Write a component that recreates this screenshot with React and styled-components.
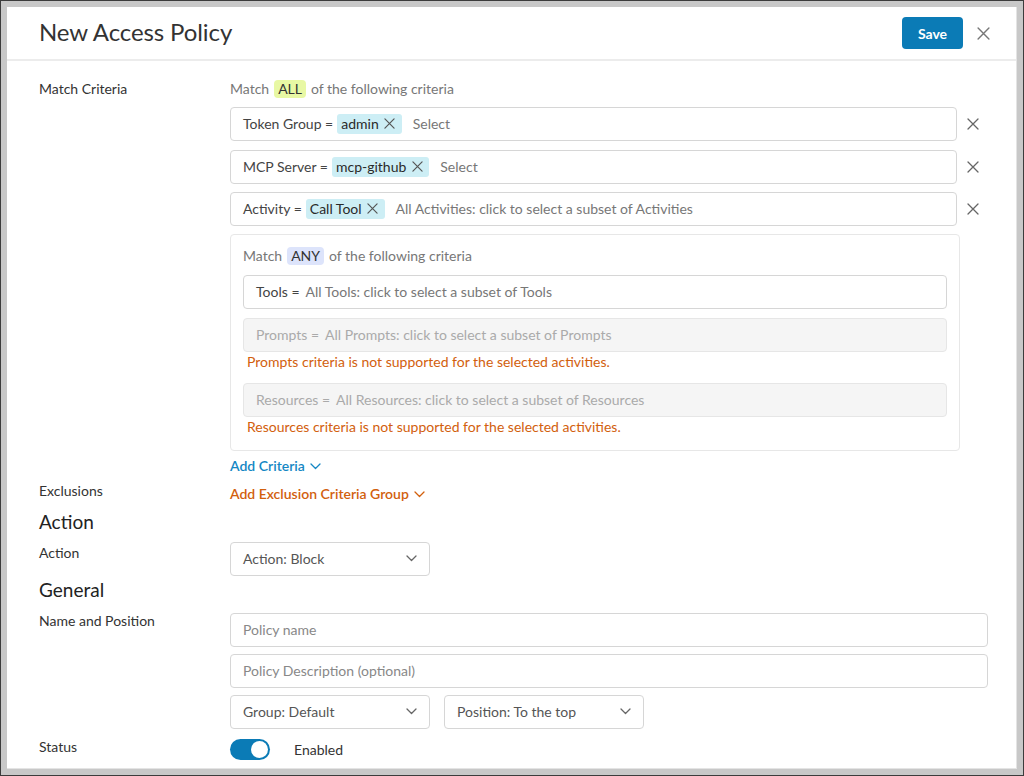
import React from "react";
import styled, { createGlobalStyle } from "styled-components";

const Global = createGlobalStyle`
  html, body { margin: 0; padding: 0; }
  body {
    width: 1024px; height: 776px; overflow: hidden;
    background: #c8c8c8;
    font-family: Lato, "Open Sans", "Liberation Sans", sans-serif;
    color: #333;
  }
  #root { height: 100%; }
`;

const Frame = styled.div`
  box-sizing: border-box;
  width: 1024px; height: 776px;
  border: 1px solid #3c3c3c;
  padding: 6px 6px 7px 6px;
  background: #c8c8c8;
`;

const Panel = styled.div`
  box-sizing: border-box;
  width: 1010px; height: 762px;
  background: #fff;
  border-right: 1px solid #e4e4e4;
  border-bottom: 1px solid #e4e4e4;
  overflow: hidden;
  display: flex;
  flex-direction: column;
`;

const Header = styled.div`
  height: 52px;
  border-bottom: 2px solid #ececec;
  display: flex;
  align-items: center;
  padding: 0 25px 0 32px;
  flex-shrink: 0;
`;

const Title = styled.h1`
  margin: 0 0 3px 0;
  font-size: 24px;
  font-weight: 400;
  color: #333;
  flex: 1;
  letter-spacing: -0.1px;
`;

const SaveButton = styled.button`
  width: 61px; height: 32px;
  border: none;
  border-radius: 4px;
  background: #0b7bb6;
  color: #fff;
  font-family: inherit;
  font-weight: 700;
  font-size: 14px;
  margin-right: 12px;
`;

const IconButton = styled.span`
  display: inline-flex;
  align-items: center;
  justify-content: center;
  width: ${p => p.$size || 24}px;
  height: ${p => p.$size || 24}px;
  color: ${p => p.$color || "#666"};
  flex-shrink: 0;
`;

const Body = styled.div`
  padding: 18px 28px 0 32px;
  display: flex;
  flex-direction: column;
`;

const FormRow = styled.div`
  display: grid;
  grid-template-columns: 191px 1fr;
  margin-top: ${p => p.$mt || 0}px;
`;

const Label = styled.div`
  font-size: 14px;
  line-height: 20px;
  color: #333;
  padding-top: ${p => p.$pt || 0}px;
`;

const Field = styled.div`
  display: flex;
  flex-direction: column;
  padding-top: ${p => p.$pt || 0}px;
`;

const SectionHeading = styled.h2`
  margin: ${p => p.$mt || 0}px 0 0 0;
  font-size: 19px;
  line-height: 24px;
  font-weight: 400;
  color: #222;
`;

const MatchLine = styled.div`
  font-size: 14px;
  line-height: 20px;
  color: #777;
  display: flex;
  align-items: center;
  gap: 5px;
`;

const Badge = styled.span`
  background: ${p => p.$bg};
  color: #333;
  border-radius: 4px;
  padding: 0 4px;
  line-height: 18px;
`;

const CriteriaRow = styled.div`
  display: flex;
  align-items: center;
  margin-top: ${p => p.$mt || 0}px;
`;

const Box = styled.div`
  box-sizing: border-box;
  height: 34px;
  flex: ${p => (p.$grow ? "1 1 auto" : "0 0 auto")};
  width: ${p => (p.$w ? p.$w + "px" : "auto")};
  border: 1px solid ${p => (p.$disabled ? "#e6e6e6" : "#d6d6d6")};
  background: ${p => (p.$disabled ? "#f5f5f5" : "#fff")};
  border-radius: 4px;
  display: flex;
  align-items: center;
  padding: 0 12px 1px 12px;
  font-size: 14px;
  color: ${p => (p.$disabled ? "#aaa" : "#555")};
  gap: 4px;
  margin-top: ${p => p.$mt || 0}px;
  white-space: nowrap;
`;

const Key = styled.span`
  color: ${p => (p.$disabled ? "#aaa" : "#444")};
`;

const Hint = styled.span`
  color: ${p => (p.$disabled ? "#aaa" : "#777")};
  margin-left: 2px;
`;

const Placeholder = styled.span`
  color: #888;
`;

const Chip = styled.span`
  display: inline-flex;
  align-items: center;
  gap: 4px;
  background: #cdeef5;
  color: #2a2a2a;
  border-radius: 3px;
  height: 20px;
  padding: 0 5px 0 4px;
  margin-right: 5px;
`;

const RemoveCol = styled.span`
  width: 31px;
  display: flex;
  justify-content: center;
  flex-shrink: 0;
`;

const Nested = styled.div`
  box-sizing: border-box;
  width: 730px;
  margin-top: 8px;
  border: 1px solid #e7e7e7;
  border-radius: 4px;
  padding: 11px 12px 14px 12px;
  display: flex;
  flex-direction: column;
`;

const ErrorText = styled.div`
  font-size: 14px;
  line-height: 18px;
  color: #d2600d;
  margin-top: 1px;
  padding-left: 4px;
`;

const LinkButton = styled.div`
  display: flex;
  align-items: center;
  gap: 5px;
  font-size: 14px;
  line-height: 20px;
  font-weight: 600;
  color: ${p => p.$color};
  margin-top: ${p => p.$mt || 0}px;
`;

const SelectBox = styled(Box)`
  justify-content: space-between;
`;

const SelectRow = styled.div`
  display: flex;
  gap: 14px;
  margin-top: 7px;
`;

const StatusLine = styled.div`
  display: flex;
  align-items: center;
  gap: 24px;
  padding-top: 2px;
  font-size: 14px;
  color: #333;
`;

const Toggle = styled.span`
  position: relative;
  width: 40px;
  height: 21px;
  border-radius: 11px;
  background: #0b7bb6;
  display: inline-block;
  &::after {
    content: "";
    position: absolute;
    right: 2px;
    top: 2px;
    width: 17px;
    height: 17px;
    border-radius: 50%;
    background: #fff;
  }
`;

const XIcon = ({ size = 12, color = "#666", sw = 1.3 }) => (
  <svg width={size} height={size} viewBox="0 0 12 12" fill="none">
    <path d="M1 1L11 11M11 1L1 11" stroke={color} strokeWidth={sw} strokeLinecap="round" />
  </svg>
);

const Chevron = ({ color = "#666", w = 11 }) => (
  <svg width={w} height={7} viewBox="0 0 11 7" fill="none">
    <path d="M1 1L5.5 5.5L10 1" stroke={color} strokeWidth="1.3" strokeLinecap="round" strokeLinejoin="round" />
  </svg>
);

const ChipItem = ({ children }) => (
  <Chip>
    {children}
    <IconButton $size={14}><XIcon size={11} color="#555" /></IconButton>
  </Chip>
);

const Select = ({ children, w }) => (
  <SelectBox $w={w}>
    <span>{children}</span>
    <Chevron />
  </SelectBox>
);

export default function App() {
  return (
    <>
      <Global />
      <Frame>
        <Panel>
          <Header>
            <Title>New Access Policy</Title>
            <SaveButton>Save</SaveButton>
            <IconButton $size={16}><XIcon size={13} color="#777" /></IconButton>
          </Header>
          <Body>
            <FormRow>
              <Label>Match Criteria</Label>
              <Field>
                <MatchLine>Match <Badge $bg="#e8f8a4">ALL</Badge> of the following criteria</MatchLine>
                <CriteriaRow $mt={8}>
                  <Box $grow>
                    <Key>Token Group =</Key>
                    <ChipItem>admin</ChipItem>
                    <Hint>Select</Hint>
                  </Box>
                  <RemoveCol><XIcon /></RemoveCol>
                </CriteriaRow>
                <CriteriaRow $mt={9}>
                  <Box $grow>
                    <Key>MCP Server =</Key>
                    <ChipItem>mcp-github</ChipItem>
                    <Hint>Select</Hint>
                  </Box>
                  <RemoveCol><XIcon /></RemoveCol>
                </CriteriaRow>
                <CriteriaRow $mt={8}>
                  <Box $grow>
                    <Key>Activity =</Key>
                    <ChipItem>Call Tool</ChipItem>
                    <Hint>All Activities: click to select a subset of Activities</Hint>
                  </Box>
                  <RemoveCol><XIcon /></RemoveCol>
                </CriteriaRow>
                <Nested>
                  <MatchLine>Match <Badge $bg="#dde4fb">ANY</Badge> of the following criteria</MatchLine>
                  <Box $mt={9}>
                    <Key>Tools =</Key>
                    <Hint>All Tools: click to select a subset of Tools</Hint>
                  </Box>
                  <Box $mt={9} $disabled>
                    <Key $disabled>Prompts =</Key>
                    <Hint $disabled>All Prompts: click to select a subset of Prompts</Hint>
                  </Box>
                  <ErrorText>Prompts criteria is not supported for the selected activities.</ErrorText>
                  <Box $mt={12} $disabled>
                    <Key $disabled>Resources =</Key>
                    <Hint $disabled>All Resources: click to select a subset of Resources</Hint>
                  </Box>
                  <ErrorText>Resources criteria is not supported for the selected activities.</ErrorText>
                </Nested>
                <LinkButton $color="#1587c4" $mt={5}>Add Criteria <Chevron color="#1587c4" w={11} /></LinkButton>
              </Field>
            </FormRow>
            <FormRow $mt={5}>
              <Label>Exclusions</Label>
              <Field $pt={3}>
                <LinkButton $color="#d2600d">Add Exclusion Criteria Group <Chevron color="#d2600d" w={11} /></LinkButton>
              </Field>
            </FormRow>
            <SectionHeading $mt={6}>Action</SectionHeading>
            <FormRow $mt={8}>
              <Label $pt={1}>Action</Label>
              <Field>
                <Select w={200}>Action: Block</Select>
              </Field>
            </FormRow>
            <SectionHeading $mt={2}>General</SectionHeading>
            <FormRow $mt={9}>
              <Label>Name and Position</Label>
              <Field $pt={2}>
                <Box><Placeholder>Policy name</Placeholder></Box>
                <Box $mt={7}><Placeholder>Policy Description (optional)</Placeholder></Box>
                <SelectRow>
                  <Select w={200}>Group: Default</Select>
                  <Select w={200}>Position: To the top</Select>
                </SelectRow>
              </Field>
            </FormRow>
            <FormRow $mt={8}>
              <Label>Status</Label>
              <Field>
                <StatusLine>
                  <Toggle />
                  <span>Enabled</span>
                </StatusLine>
              </Field>
            </FormRow>
          </Body>
        </Panel>
      </Frame>
    </>
  );
}
